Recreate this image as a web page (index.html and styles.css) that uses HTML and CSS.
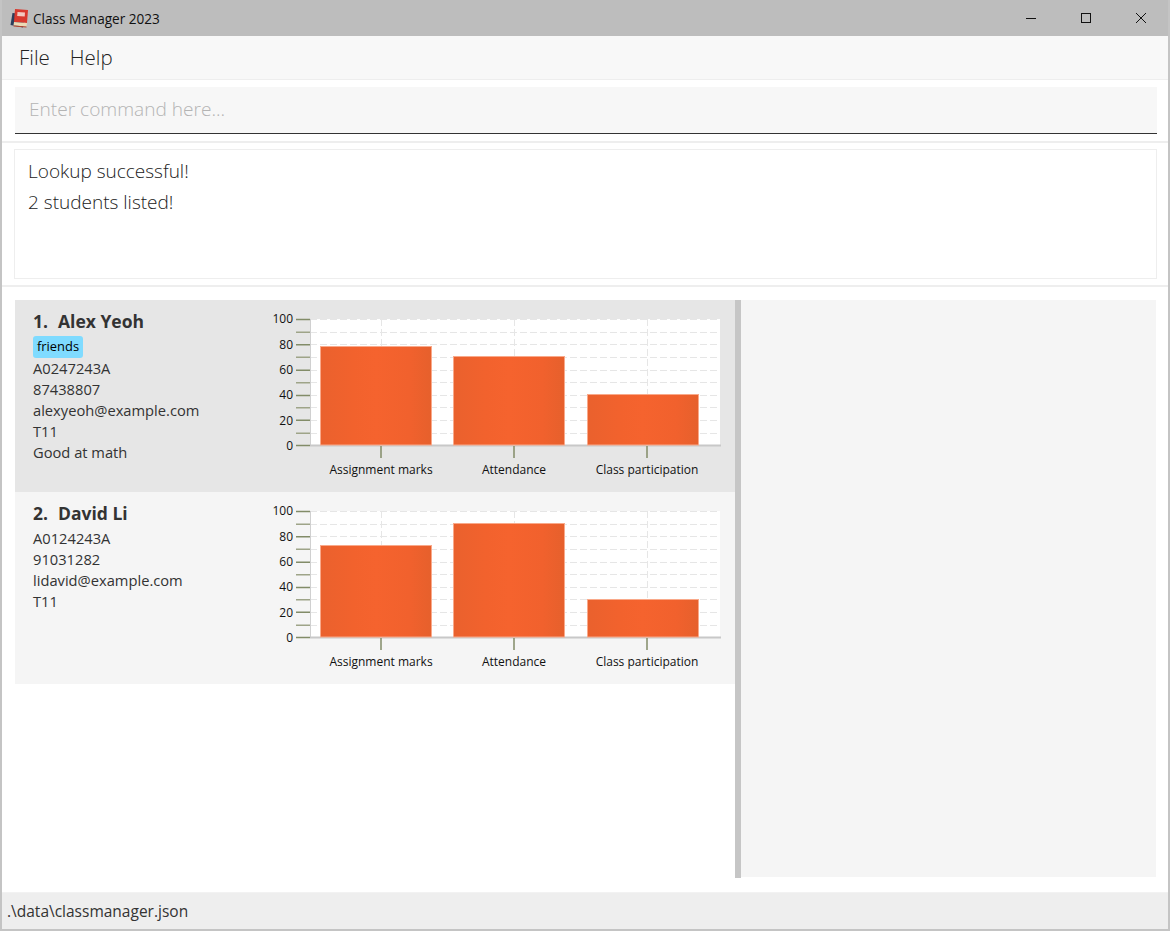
FILE: index.html
```html
<!DOCTYPE html>
<html lang="en">
<head>
    <meta charset="UTF-8">
    <meta name="viewport" content="width=device-width, initial-scale=1.0">
    <title>Class Manager 2023</title>
    <link rel="stylesheet" href="styles.css">
</head>
<body>

<svg class="defs" width="0" height="0" aria-hidden="true">
    <defs>
        <linearGradient id="barFill" x1="0" y1="0" x2="1" y2="0">
            <stop offset="0" stop-color="#ea612d"/>
            <stop offset="0.3" stop-color="#f2622d"/>
            <stop offset="0.5" stop-color="#f5632e"/>
            <stop offset="0.8" stop-color="#f1612d"/>
            <stop offset="1" stop-color="#e6602c"/>
        </linearGradient>
        <g id="chartFrame">
            <rect x="45" y="19" width="410" height="126" fill="#fff"/>
            <!-- grid -->
            <path d="M45 19.500H455M45 32.500H455M45 44.500H455M45 57.500H455M45 70.500H455M45 82.500H455M45 95.500H455M45 107.500H455M45 120.500H455M45 133.500H455M116.500 19V145M249.500 19V145M382.500 19V145" fill="none" stroke="#e6e6e6" stroke-dasharray="7 3"/>
            <!-- axes -->
            <path d="M45.500 19V145" stroke="#d0d0d0" fill="none"/>
            <path d="M45 145.500H456" stroke="#c8c8c8" stroke-width="2" fill="none"/>
            <path d="M31 19.500H45M31 44.750H45M31 70.250H45M31 95.500H45M31 120.250H45M31 145.500H45M116 146V158M249 146V158M382 146V158" stroke="#828c68" stroke-width="1.500" fill="none"/>
            <path d="M31 32.250H45M31 57.250H45M31 82.750H45M31 107.750H45M31 133.250H45" stroke="#9ea488" stroke-width="1.500" fill="none"/>
            <g class="y-labels">
                <text x="28" y="23">100</text>
                <text x="28" y="49">80</text>
                <text x="28" y="74">60</text>
                <text x="28" y="99">40</text>
                <text x="28" y="125">20</text>
                <text x="28" y="150">0</text>
            </g>
            <g class="x-labels">
                <text x="116" y="174">Assignment marks</text>
                <text x="249" y="174">Attendance</text>
                <text x="382" y="174">Class participation</text>
            </g>
        </g>
    </defs>
</svg>

<div class="window">
    <div class="titlebar">
        <svg class="app-icon" width="20" height="20" viewBox="0 0 20 20">
            <path d="M2.500 5L0.500 17L13 19.500L15 6Z" fill="#2c3e5c"/>
            <path d="M5 1L18 2L17 15L4 14Z" fill="#d8392e"/>
            <path d="M4 14L17 15L16.500 18.500L3.500 17.500Z" fill="#ecd9b4"/>
            <path d="M3.500 17.500L16.500 18.500L16.500 19.500L3.500 18.500Z" fill="#b8452f"/>
            <path d="M7.500 4L15 4.500L14.700 8.500L7.200 8Z" fill="#f3c9c0"/>
        </svg>
        <span class="app-title">Class Manager 2023</span>
        <div class="win-buttons">
            <svg width="12" height="12" viewBox="0 0 12 12"><path d="M1 6.500H11" stroke="#111" fill="none"/></svg>
            <svg width="12" height="12" viewBox="0 0 12 12"><rect x="1.500" y="1.500" width="9" height="9" stroke="#111" fill="none"/></svg>
            <svg width="12" height="12" viewBox="0 0 12 12"><path d="M1 1L11 11M11 1L1 11" stroke="#111" fill="none"/></svg>
        </div>
    </div>

    <div class="menubar">
        <span>File</span>
        <span>Help</span>
    </div>

    <div class="command-pane">
        <div class="command-box">Enter command here...</div>
    </div>

    <div class="result-pane">
        <div class="result-box">
            <p>Lookup successful!</p>
            <p>2 students listed!</p>
        </div>
    </div>

    <div class="main-pane">
        <div class="student-list">
            <div class="student-card selected">
                <div class="student-info">
                    <h2><span>1.</span>Alex Yeoh</h2>
                    <span class="tag">friends</span>
                    <p>A0247243A</p>
                    <p>87438807</p>
                    <p>alexyeoh@example.com</p>
                    <p>T11</p>
                    <p>Good at math</p>
                </div>
                <svg class="chart" width="460" height="192" viewBox="0 0 460 192">
                    <use href="#chartFrame"/>
                    <g class="bars">
                        <rect x="55.500" y="46.500" width="111" height="98.500"/>
                        <rect x="188.500" y="56.500" width="111" height="88.500"/>
                        <rect x="322.500" y="94.500" width="111" height="50.500"/>
                    </g>
                </svg>
            </div>
            <div class="student-card">
                <div class="student-info">
                    <h2><span>2.</span>David Li</h2>
                    <p>A0124243A</p>
                    <p>91031282</p>
                    <p>lidavid@example.com</p>
                    <p>T11</p>
                </div>
                <svg class="chart" width="460" height="192" viewBox="0 0 460 192">
                    <use href="#chartFrame"/>
                    <g class="bars">
                        <rect x="55.500" y="53.500" width="111" height="91.500"/>
                        <rect x="188.500" y="31.500" width="111" height="113.500"/>
                        <rect x="322.500" y="107.500" width="111" height="37.500"/>
                    </g>
                </svg>
            </div>
        </div>
        <div class="splitter"></div>
        <div class="detail-panel"></div>
    </div>

    <div class="statusbar">.\data\classmanager.json</div>
</div>

</body>
</html>
```

FILE: styles.css
```css
html, body {
    margin: 0;
    padding: 0;
    height: 100%;
}

body {
    font-family: "Open Sans", "Noto Sans", sans-serif;
    color: #333;
    background: #fff;
}

p {
    margin: 0;
}

.defs {
    position: absolute;
}

.window {
    height: 931px;
    box-sizing: border-box;
    display: flex;
    flex-direction: column;
    border-left: 2px solid #c4c4c4;
    border-right: 2px solid #c4c4c4;
    border-bottom: 2px solid #c4c4c4;
    overflow: hidden;
}

/* title bar */
.titlebar {
    height: 36px;
    margin: 0 -2px;
    background: #bdbdbd;
    display: flex;
    align-items: center;
    padding-left: 10px;
    flex: none;
}

.app-icon {
    margin-right: 3px;
}

.app-title {
    font-size: 13.600px;
    color: #111;
}

.win-buttons {
    margin-left: auto;
    display: flex;
    gap: 43px;
    padding-right: 23px;
}

/* menu */
.menubar {
    flex: none;
    background: #f8f8f8;
    border-bottom: 1px solid #eee;
    display: flex;
    align-items: center;
    gap: 20px;
    padding-left: 17px;
    padding-bottom: 2px;
    box-sizing: border-box;
    height: 44px;
    font-size: 20.500px;
    font-weight: 300;
    color: #222;
}

/* command + result */
.command-pane {
    height: 63px;
    flex: none;
    padding: 7px 11px 0 13px;
    box-sizing: border-box;
    border-bottom: 2px solid #eee;
}

.command-box {
    height: 47px;
    box-sizing: border-box;
    background: #f7f7f7;
    border-bottom: 1px solid #333;
    padding: 9px 14px;
    font-size: 19.100px;
    font-weight: 300;
    color: #b4b4b4;
}

.result-pane {
    height: 144px;
    flex: none;
    box-sizing: border-box;
    padding: 6px 11px 6px 12px;
    border-bottom: 2px solid #eee;
}

.result-box {
    height: 130px;
    box-sizing: border-box;
    border: 1px solid #eee;
    padding: 6px 13px;
    font-size: 19px;
    font-weight: 300;
    line-height: 31px;
    color: #222;
}

/* lists */
.main-pane {
    flex: none;
    height: 578px;
    margin-top: 13px;
    display: flex;
    padding-left: 13px;
    padding-right: 12px;
}

.student-list {
    width: 720px;
    flex: none;
}

.student-card {
    height: 192px;
    background: #f5f5f5;
    display: flex;
    justify-content: space-between;
    padding-right: 10px;
}

.student-card.selected {
    background: #e6e6e6;
}

.student-info {
    padding: 9px 0 0 18px;
    font-size: 14.700px;
    line-height: 21px;
}

.student-info h2 {
    margin: 0 0 2px;
    font-size: 17.500px;
    line-height: 25px;
    font-weight: 700;
    color: #333;
}

.student-info h2 span {
    margin-right: 10px;
}

.tag {
    display: block;
    width: fit-content;
    padding: 0 4px;
    height: 22px;
    line-height: 21px;
    font-size: 12.900px;
    color: #000;
    background: #7fdbff;
    border-radius: 3px;
}

.chart {
    flex: none;
    display: block;
}

#chartFrame text {
    font-size: 12px;
    fill: #111;
}

.y-labels {
    text-anchor: end;
}

.x-labels {
    text-anchor: middle;
}

.bars rect {
    fill: url(#barFill);
    stroke: #f9a98a;
    stroke-width: 1;
}

.splitter {
    width: 6px;
    flex: none;
    background: #c6c6c6;
}

.detail-panel {
    flex: 1;
    margin-bottom: 1px;
    background: #f5f5f5;
}

/* status */
.statusbar {
    margin-top: 14px;
    flex: 1;
    background: #eee;
    border-top: 1px solid #f2f2f2;
    padding: 7px 0 0 5px;
    font-size: 15.500px;
    font-weight: 400;
    color: #333;
}
```
